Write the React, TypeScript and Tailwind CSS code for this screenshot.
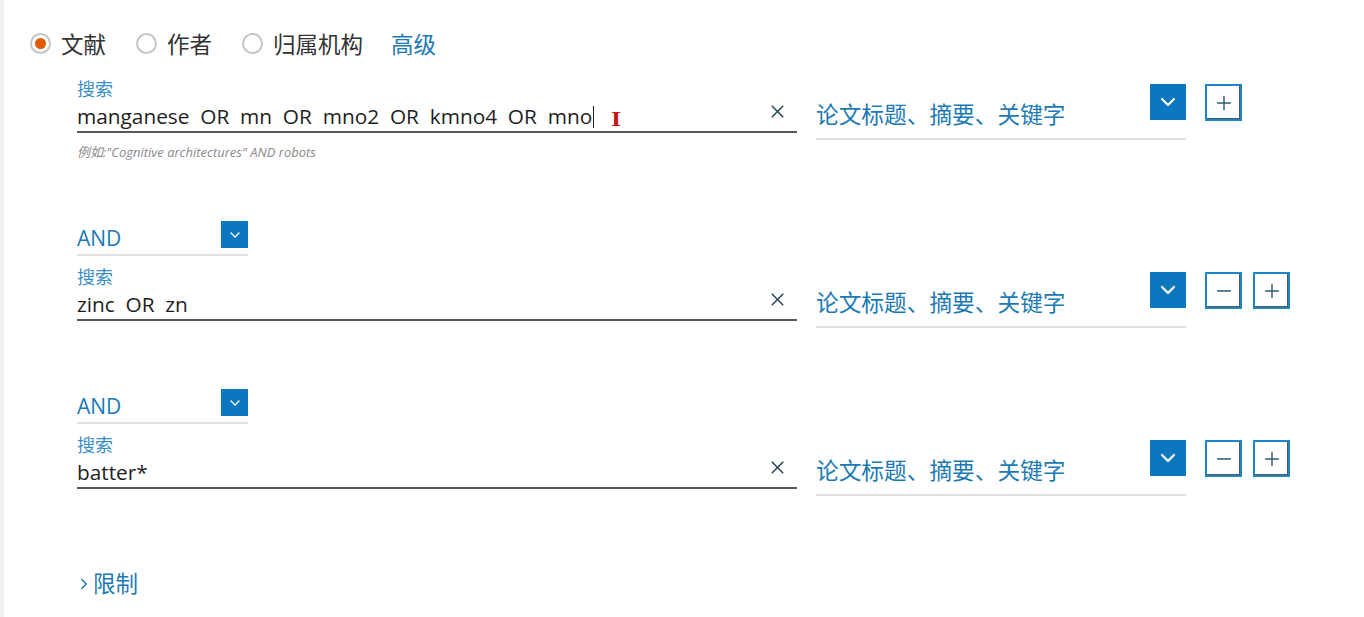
import { ChevronDown, ChevronRight, Minus, Plus, X } from 'lucide-react';

const latin = { fontFamily: '"Open Sans", "Noto Sans CJK SC", sans-serif' };
const cjk = { fontFamily: '"Noto Sans CJK SC", "Noto Sans", sans-serif' };

type Criterion = {
  connector?: string;
  value: string;
  hint?: string;
  removable: boolean;
  caret?: boolean;
};

const criteria: Criterion[] = [
  { value: 'manganese  OR  mn  OR  mno2  OR  kmno4  OR  mno', hint: '例如:"Cognitive architectures" AND robots', removable: false, caret: true },
  { connector: 'AND', value: 'zinc  OR  zn', removable: true },
  { connector: 'AND', value: 'batter*', removable: true },
];

function Radio({ label, checked }: { label: string; checked?: boolean }) {
  return (
    <label className="flex items-center gap-[10px] text-[22.5px] leading-[28px] text-[#333]" style={cjk}>
      <span className="flex h-[21px] w-[21px] items-center justify-center rounded-full border-2 border-[#c4c4c4] bg-white">
        {checked ? <span className="h-[11px] w-[11px] rounded-full bg-[#e25a05]" /> : null}
      </span>
      {label}
    </label>
  );
}

function SquareButton({ children }: { children: React.ReactNode }) {
  return (
    <button className="flex h-[37px] w-[37px] items-center justify-center border-2 border-[#1b86c9] bg-white text-[#2c5a70] shadow-[inset_-1px_-1px_0_#555]">
      {children}
    </button>
  );
}

function CriterionBlock({ item }: { item: Criterion }) {
  return (
    <div>
      {item.connector ? (
        <div className="mb-[10px] flex h-[35px] w-[171px] items-start justify-between border-b-2 border-[#e3e3e3]">
          <span className="mt-[4px] text-[21px] leading-[26px] text-[#1b79b3]" style={latin}>
            {item.connector}
          </span>
          <span className="flex h-[27px] w-[27px] items-center justify-center bg-[#0b77bf] text-white">
            <ChevronDown size={16} strokeWidth={2} />
          </span>
        </div>
      ) : null}

      <div className="flex items-start">
        <div className="w-[720px]">
          <div className="h-[20px] text-[18px] leading-[20px] text-[#3a8fc6]" style={cjk}>
            搜索
          </div>
          <div className="flex h-[35px] items-start border-b-2 border-[#585858]">
            <span className="mt-[4px] flex-1 whitespace-pre text-[20.8px] leading-[28px] text-[#1e1e1e]" style={latin}>
              {item.value}
              {item.caret ? (
                <>
                  <span className="ml-[1px] inline-block h-[22px] w-[1px] translate-y-[4px] bg-[#222]" />
                  <span className="ml-[18px] inline-block translate-y-[2px] scale-x-125 font-bold text-[#c81414]" style={{ fontFamily: '"Liberation Serif", serif' }}>
                    I
                  </span>
                </>
              ) : null}
            </span>
            <X className="mr-[9px] mt-[3px] text-[#2f4c5c]" size={21} strokeWidth={1.9} />
          </div>
          {item.hint ? (
            <div className="mt-[11px] text-[13px] italic leading-[16px] text-[#8a8a8a]" style={latin}>
              {item.hint}
            </div>
          ) : null}
        </div>

        <div className="ml-[19px] flex h-[62px] w-[370px] items-start justify-between border-b-2 border-[#e0e0e0]">
          <span className="mt-[22px] text-[22.7px] leading-[28px] text-[#1b79b3]" style={cjk}>
            论文标题、摘要、关键字
          </span>
          <span className="mt-[6px] flex h-[36px] w-[36px] items-center justify-center bg-[#0b77bf] text-white">
            <ChevronDown size={24} strokeWidth={2.2} />
          </span>
        </div>

        <div className="ml-[19px] mt-[6px] flex gap-[11px]">
          {item.removable ? (
            <SquareButton>
              <Minus size={22} strokeWidth={1.6} />
            </SquareButton>
          ) : null}
          <SquareButton>
            <Plus size={22} strokeWidth={1.6} />
          </SquareButton>
        </div>
      </div>
    </div>
  );
}

export default function App() {
  return (
    <div className="flex min-h-[617px] bg-white">
      <div className="w-[4px] bg-[#f1f1f1]" />
      <div className="flex-1">
        <div className="ml-[26px] mt-[29px] flex items-center gap-[30px]">
          <Radio label="文献" checked />
          <Radio label="作者" />
          <Radio label="归属机构" />
          <a className="-ml-[2px] text-[22.5px] leading-[28px] text-[#1b79b3]" style={cjk}>
            高级
          </a>
        </div>

        <div className="ml-[73px] mt-[21px] flex flex-col gap-[61px]">
          {criteria.map((item, i) => (
            <CriterionBlock key={i} item={item} />
          ))}
        </div>

        <div className="ml-[71px] mt-[72px] flex items-center text-[22.5px] leading-[28px] text-[#1b79b3]" style={cjk}>
          <ChevronRight size={18} strokeWidth={2} className="mr-[0px] mt-[4px]" />
          限制
        </div>
      </div>
    </div>
  );
}
